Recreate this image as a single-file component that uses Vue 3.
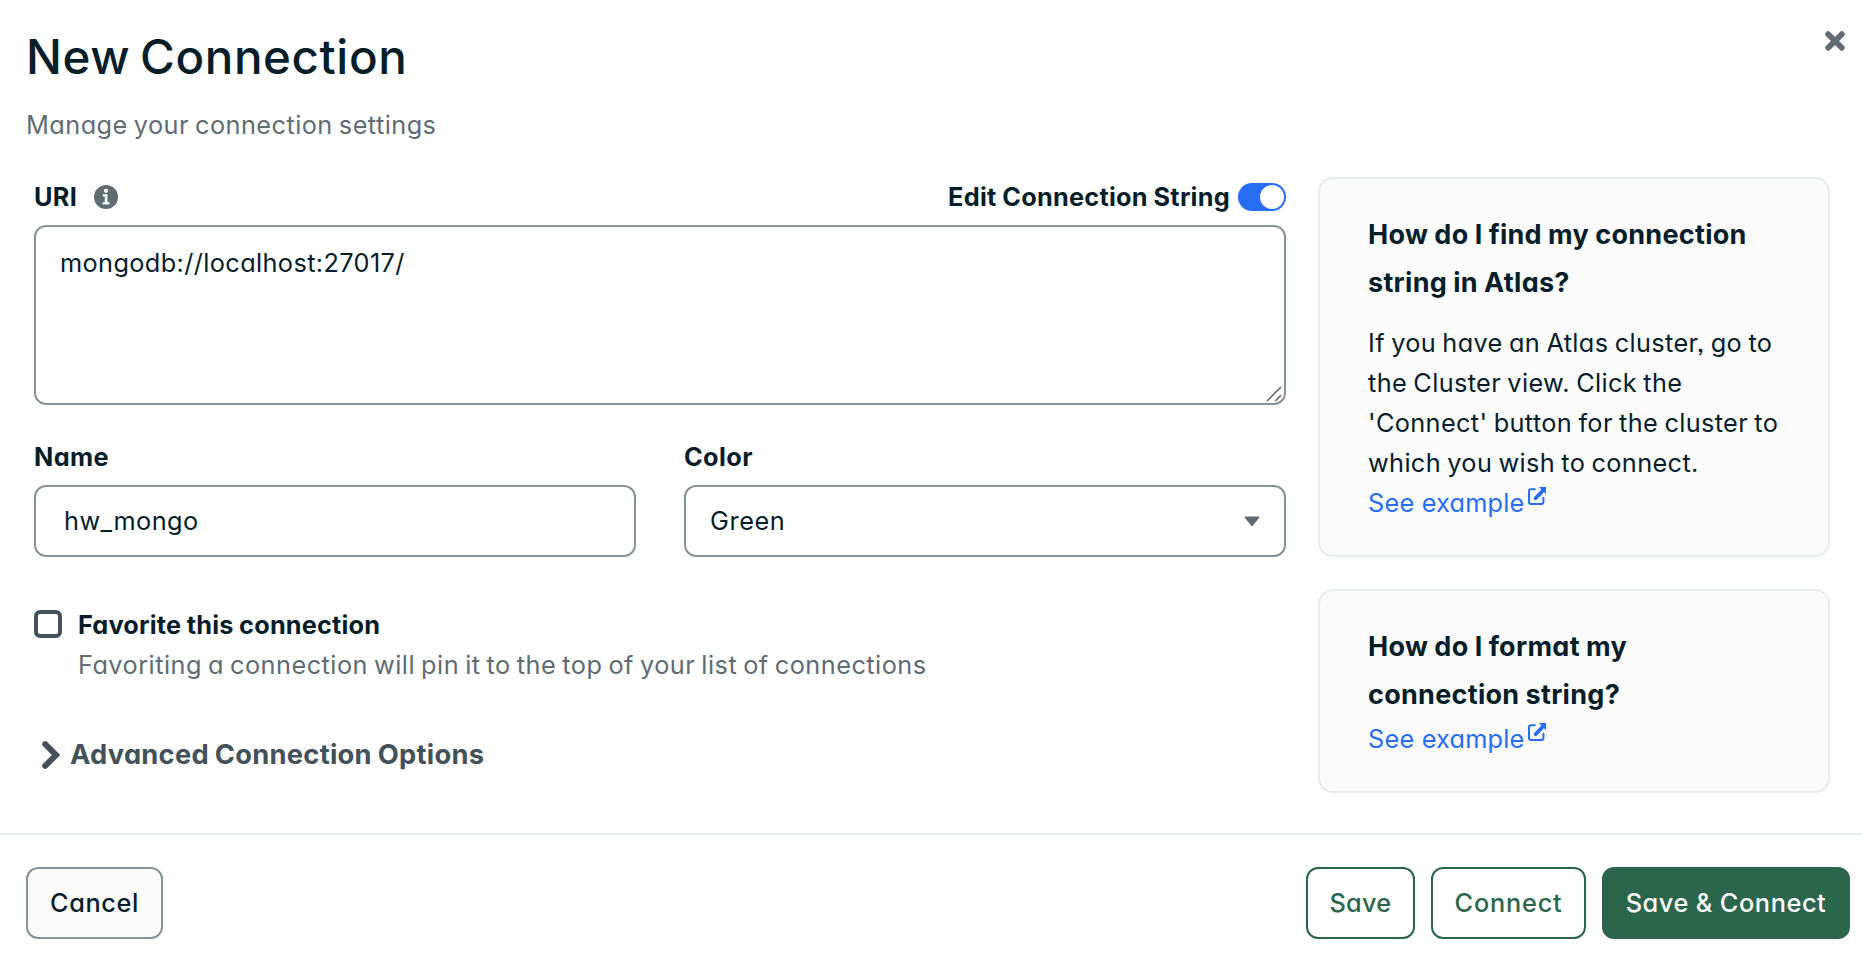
<script setup>
import { ref } from 'vue'

const uri = ref('mongodb://localhost:27017/')
const name = ref('hw_mongo')
const color = ref('Green')
const editing = ref(true)
const favorite = ref(false)

const helpCards = [
  {
    title: 'How do I find my connection string in Atlas?',
    body: "If you have an Atlas cluster, go to the Cluster view. Click the 'Connect' button for the cluster to which you wish to connect.",
  },
  { title: 'How do I format my connection string?', body: '' },
]
</script>

<template>
  <div class="modal">
    <header class="head">
      <div>
        <h1 class="title">New Connection</h1>
        <p class="subtitle">Manage your connection settings</p>
      </div>
      <button class="close" aria-label="Close">
        <svg width="20" height="20" viewBox="0 0 20 20">
          <path d="M3.2 3.2l13.6 13.6M16.8 3.2L3.2 16.8" stroke="#5f6c74" stroke-width="5.8" stroke-linecap="round" />
        </svg>
      </button>
    </header>

    <div class="content">
      <main class="form">
        <div class="uri-row">
          <label class="label uri-label">URI</label>
          <svg class="info" width="24" height="24" viewBox="0 0 24 24">
            <circle cx="12" cy="12" r="12" fill="#5f6c74" />
            <circle cx="12" cy="5.8" r="2.1" fill="#fff" />
            <path d="M8.8 9.2h4.7v8h2v2.2H8.6v-2.2h2.2v-5.8h-2z" fill="#fff" />
          </svg>
          <span class="label toggle-label">Edit Connection String</span>
          <button class="toggle" role="switch" :aria-checked="editing" @click="editing = !editing">
            <span class="knob"></span>
          </button>
        </div>

        <div class="uri-box">
          <textarea v-model="uri" class="uri-input" spellcheck="false"></textarea>
          <svg class="grip" width="16" height="16" viewBox="0 0 16 16">
            <path d="M1 15L15 1M9.3 15L15 9.3" fill="none" stroke="#5a5a5a" stroke-width="1.4" />
          </svg>
        </div>

        <div class="pair">
          <div class="field">
            <label class="label short">Name</label>
            <input v-model="name" class="control name-input" spellcheck="false" />
          </div>
          <div class="field">
            <label class="label short">Color</label>
            <button class="control select">
              <span>{{ color }}</span>
              <svg width="16" height="11" viewBox="0 0 16 11">
                <path d="M1.6 1.4h12.8L8 9.2z" fill="#5f6c74" stroke="#5f6c74" stroke-width="1.8" stroke-linejoin="round" />
              </svg>
            </button>
          </div>
        </div>

        <div class="favorite">
          <button class="check" role="checkbox" :aria-checked="favorite" @click="favorite = !favorite"></button>
          <div>
            <div class="label fav-label">Favorite this connection</div>
            <div class="fav-note">Favoriting a connection will pin it to the top of your list of connections</div>
          </div>
        </div>

        <button class="advanced">
          <svg width="18" height="28" viewBox="0 0 18 28">
            <path d="M3.2 3.2L14 14L3.2 24.8" fill="none" stroke="#43515a" stroke-width="6" stroke-linecap="round" />
          </svg>
          <span>Advanced Connection Options</span>
        </button>
      </main>

      <aside class="side">
        <section v-for="card in helpCards" :key="card.title" class="card">
          <h2 class="card-title">{{ card.title }}</h2>
          <p v-if="card.body" class="card-body">{{ card.body }}</p>
          <a class="link">
            <span>See example</span>
            <svg width="18" height="18" viewBox="0 0 18 18">
              <path d="M6.8 2.3H3A2 2 0 0 0 1 4.3V15a2 2 0 0 0 2 2h10.4a2 2 0 0 0 2-2v-4.2" fill="none" stroke="#266df4" stroke-width="2" stroke-linecap="round" />
              <path d="M7.6 11.2L14 4.6" stroke="#266df4" stroke-width="3.8" stroke-linecap="round" />
              <path d="M10.8 0H18v7.2z" fill="#266df4" />
            </svg>
          </a>
        </section>
      </aside>
    </div>

    <footer class="foot">
      <button class="btn cancel">Cancel</button>
      <div class="actions">
        <button class="btn outline save">Save</button>
        <button class="btn outline connect">Connect</button>
        <button class="btn primary">Save &amp; Connect</button>
      </div>
    </footer>
  </div>
</template>

<style>
body {
  margin: 0;
  background: #fff;
  overflow: hidden;
}
</style>

<style scoped>
.modal {
  box-sizing: border-box;
  height: 954px;
  display: flex;
  flex-direction: column;
  background: #fff;
  color: #061e2a;
  font: 400 25.3px/40px Inter, "Liberation Sans", sans-serif;
  font-feature-settings: "cv11", "ss03";
}
.modal * {
  box-sizing: border-box;
}
button,
input,
textarea {
  margin: 0;
  padding: 0;
  border: 0;
  background: none;
  color: inherit;
  font: inherit;
  font-feature-settings: inherit;
  outline: none;
}
.head {
  display: flex;
  justify-content: space-between;
  align-items: flex-start;
  padding: 25px 17px 0 26px;
  height: 177px;
}
.title {
  margin: 0;
  font-size: 47.5px;
  line-height: 64px;
  font-weight: 540;
  letter-spacing: 0.6px;
  word-spacing: -3.5px;
}
.subtitle {
  margin: 16px 0 0;
  color: #5f6c74;
  letter-spacing: 0.45px;
  word-spacing: -1.5px;
}
.close {
  margin-top: 6px;
  height: 20px;
  display: flex;
}
.content {
  display: flex;
  gap: 32px;
  height: 656px;
  padding: 0 32px 0 34px;
}
.form {
  width: 1252px;
}
.uri-row {
  display: flex;
  align-items: center;
  height: 40px;
}
.label {
  font-weight: 680;
  letter-spacing: 0.26px;
  word-spacing: -0.6px;
}
.uri-label {
  width: 60px;
  letter-spacing: 0.3px;
}
.toggle-label {
  margin-left: auto;
}
.toggle {
  display: flex;
  justify-content: flex-end;
  width: 48px;
  height: 28px;
  margin-left: 8px;
  padding: 2px;
  border-radius: 14px;
  background: #266df4;
}
.knob {
  width: 24px;
  height: 24px;
  border-radius: 50%;
  background: #fff;
}
.uri-box {
  position: relative;
  height: 180px;
  margin-top: 8px;
}
.uri-input {
  display: block;
  width: 100%;
  height: 100%;
  padding: 16px 24px;
  border: 2px solid #889397;
  border-radius: 12px;
  resize: none;
  letter-spacing: 0.38px;
}
.grip {
  position: absolute;
  right: 4px;
  bottom: 3px;
}
.pair {
  display: flex;
  gap: 48px;
  margin-top: 32px;
}
.field {
  flex: 1;
}
.short {
  display: block;
  margin-bottom: 8px;
  letter-spacing: 0.4px;
}
.control {
  display: flex;
  align-items: center;
  justify-content: space-between;
  width: 100%;
  height: 72px;
  border: 2px solid #889397;
  border-radius: 12px;
  letter-spacing: 0.6px;
}
.name-input {
  padding: 0 28px 2px;
  letter-spacing: 0.45px;
}
.select {
  padding: 0 24px;
}
.favorite {
  display: flex;
  gap: 16px;
  margin-top: 48px;
}
.check {
  width: 28px;
  height: 28px;
  margin-top: 5px;
  border: 4px solid #43515a;
  border-radius: 6px;
}
.fav-label {
  letter-spacing: 0.18px;
}
.fav-note {
  color: #5f6c74;
  letter-spacing: 0.47px;
  word-spacing: -1.5px;
}
.advanced {
  display: flex;
  align-items: center;
  gap: 10px;
  height: 40px;
  margin: 50px 0 0 8px;
  color: #43515a;
  font-size: 27.3px;
  font-weight: 680;
  letter-spacing: 0.26px;
  word-spacing: -0.8px;
}
.side {
  display: flex;
  flex-direction: column;
  gap: 32px;
  width: 512px;
}
.card {
  padding: 32px 45px 32px 48px;
  border: 2px solid #e8edeb;
  border-radius: 15px;
  background: #fbfbfb;
}
.card-title {
  max-width: 396px;
  margin: 0;
  font-size: 27px;
  line-height: 48px;
  font-weight: 680;
  letter-spacing: 0.28px;
  word-spacing: -0.5px;
}
.card-body {
  margin: 16px 0 0;
  letter-spacing: 0.36px;
  word-spacing: -1.2px;
}
.link {
  display: flex;
  align-items: flex-start;
  gap: 4px;
  height: 40px;
  color: #266df4;
  letter-spacing: 0.2px;
}
.link svg {
  margin-top: 4px;
}
.foot {
  display: flex;
  justify-content: space-between;
  flex: 1;
  padding: 32px 12px 0 26px;
  border-top: 2px solid #e8edeb;
}
.actions {
  display: flex;
  gap: 16px;
}
.btn {
  height: 72px;
  border: 2px solid #889397;
  border-radius: 12px;
  font-weight: 500;
  letter-spacing: 0.6px;
  word-spacing: -0.5px;
  white-space: nowrap;
}
.cancel {
  width: 137px;
  background: #fbfbfb;
}
.outline {
  border-color: #2b664c;
  color: #2b664c;
}
.save {
  width: 109px;
  letter-spacing: 0.3px;
}
.connect {
  width: 155px;
  letter-spacing: 0.8px;
}
.primary {
  width: 248px;
  border-color: #2b664c;
  background: #2b664c;
  color: #fff;
}
</style>
